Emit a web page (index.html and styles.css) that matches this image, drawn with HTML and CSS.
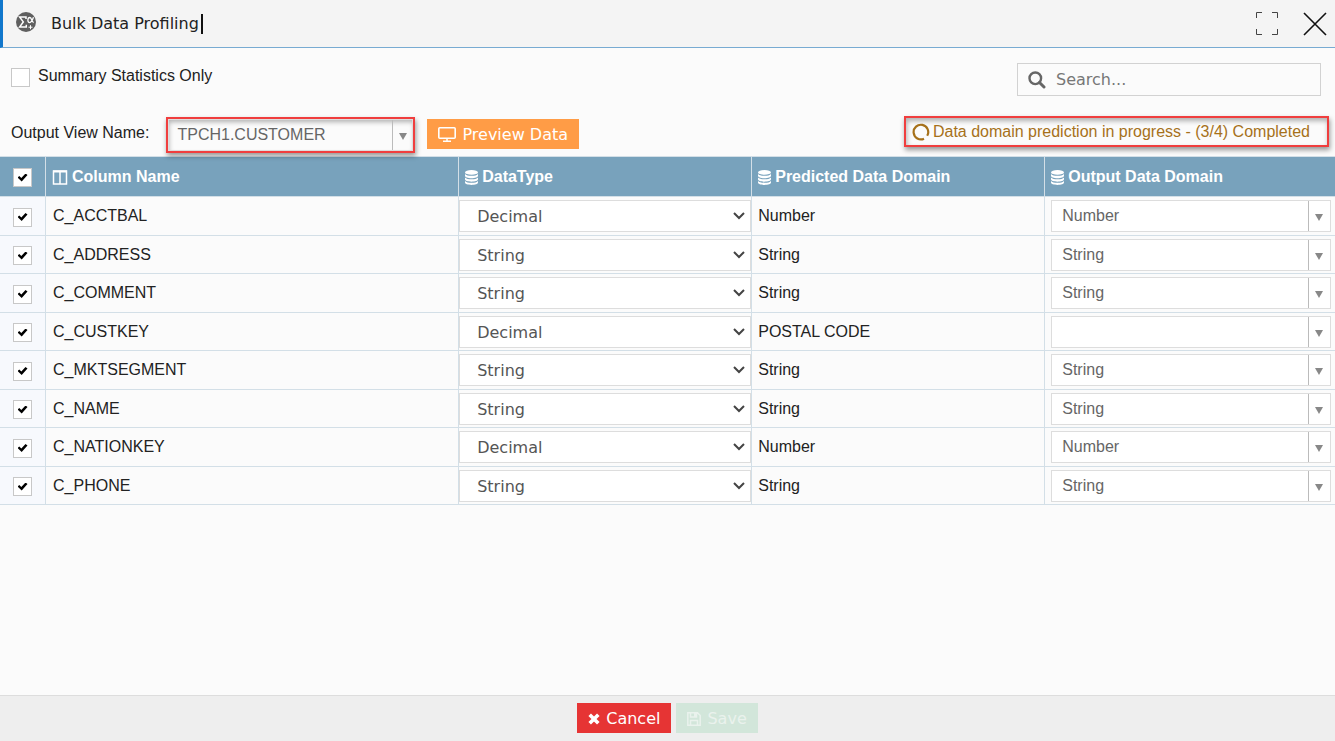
FILE: index.html
```html
<!DOCTYPE html>
<html lang="en">
<head>
  <meta charset="UTF-8">
  <meta name="viewport" content="width=device-width, initial-scale=1.0">
  <title>Bulk Data Profiling</title>
  <link rel="stylesheet" href="styles.css">
</head>
<body>
  <!-- Shared icons -->
  <svg class="icon-defs" aria-hidden="true">
    <symbol id="icon-database" viewBox="0 0 13 15">
      <ellipse cx="6.5" cy="2.4" rx="6.5" ry="2.4"/>
      <path d="M0 4c1 1.3 3.5 1.8 6.5 1.8S12 5.3 13 4v1.8c0 1.4-2.9 2.5-6.5 2.5S0 7.2 0 5.8z"/>
      <path d="M0 7.5c1 1.3 3.5 1.8 6.5 1.8s5.5-.5 6.5-1.8v1.8c0 1.4-2.9 2.4-6.5 2.4S0 10.7 0 9.3z"/>
      <path d="M0 10.9c1 1.3 3.5 1.8 6.5 1.8s5.5-.5 6.5-1.8v1.7C13 14 10.1 15 6.5 15S0 14 0 12.6z"/>
    </symbol>
  </svg>

  <header class="title-bar">
    <svg class="logo" viewBox="0 0 20 20" aria-hidden="true">
      <circle cx="10" cy="10" r="10" fill="#5f5f5f"/>
      <path d="M10 7V5H3.6L7.3 9.9L3.6 15H10.3V12.8" fill="none" stroke="#fff" stroke-width="1.5"/>
      <path d="M17.5 5.3C16.5 8 15.5 10.6 13.7 10.6C11.2 10.6 11.3 5.5 13.9 5.5C15.9 5.5 15.6 10.5 17.7 10.5" fill="none" stroke="#fff" stroke-width="1.3"/>
      <path d="M14.5 13.2v4M12.5 15.2h4" stroke="#fff" stroke-width="1"/>
    </svg>
    <h1>Bulk Data Profiling</h1>
    <button class="window-btn" aria-label="Full screen">
      <svg width="24" height="24" viewBox="0 0 24 24"><path d="M1.5 6V.5H7M17 .5h5.5V6M22.5 17v5.5H17M7 22.5H1.5V17" fill="none" stroke="#444" stroke-width="1"/></svg>
    </button>
    <button class="window-btn" aria-label="Close">
      <svg width="24" height="24" viewBox="0 0 24 24"><path d="M1 1L23 23M23 1L1 23" fill="none" stroke="#111" stroke-width="1.6"/></svg>
    </button>
  </header>

  <main>
    <div class="options">
      <label class="summary"><input type="checkbox"> Summary Statistics Only</label>
      <div class="search">
        <svg width="18" height="18" viewBox="0 0 18 18" aria-hidden="true"><circle cx="7.3" cy="7.3" r="5.8" fill="none" stroke="#666" stroke-width="2.4"/><path d="M11.5 11.5L16 16" stroke="#666" stroke-width="3" stroke-linecap="round"/></svg>
        <input type="text" placeholder="Search..." aria-label="Search">
      </div>
    </div>

    <div class="toolbar">
      <label for="view-name">Output View Name:</label>
      <div class="highlight">
        <div class="combo">
          <select id="view-name"><option>TPCH1.CUSTOMER</option></select>
        </div>
      </div>
      <button class="btn preview">
        <svg width="18" height="15" viewBox="0 0 18 15" aria-hidden="true"><rect x=".8" y=".8" width="16.4" height="10.4" rx="1" fill="none" stroke="#fff" stroke-width="1.6"/><path d="M9 11v3M5 14.2h8" stroke="#fff" stroke-width="1.5"/></svg>
        Preview Data
      </button>
      <div class="highlight status">
        <svg width="18" height="18" viewBox="0 0 18 18" aria-hidden="true"><path d="M12 15.7A7.3 7.3 0 1 1 15.2 12.8" fill="none" stroke="#a6711a" stroke-width="2.2"/></svg>
        <span>Data domain prediction in progress - (3/4) Completed</span>
      </div>
    </div>

    <table>
      <colgroup>
        <col class="col-check">
        <col class="col-name">
        <col class="col-type">
        <col class="col-type">
        <col>
      </colgroup>
      <thead>
        <tr>
          <th><input type="checkbox" aria-label="Select all" checked></th>
          <th><svg width="16" height="15" viewBox="0 0 16 15" aria-hidden="true"><path d="M1.5 1h13v13h-13zM8 1v13" fill="none" stroke="#fff" stroke-width="1.5"/><path d="M1 1.5h14" stroke="#fff" stroke-width="2"/></svg>Column Name</th>
          <th><svg width="13" height="15"><use href="#icon-database"/></svg>DataType</th>
          <th><svg width="13" height="15"><use href="#icon-database"/></svg>Predicted Data Domain</th>
          <th><svg width="13" height="15"><use href="#icon-database"/></svg>Output Data Domain</th>
        </tr>
      </thead>
      <tbody id="columns"></tbody>
    </table>
  </main>

  <footer>
    <button class="btn cancel">
      <svg width="12" height="12" viewBox="0 0 12 12" aria-hidden="true"><path d="M1.7 1.7l8.6 8.6M10.3 1.7l-8.6 8.6" stroke="#fff" stroke-width="3.6"/></svg>
      Cancel
    </button>
    <button class="btn save" disabled>
      <svg width="14" height="14" viewBox="0 0 14 14" aria-hidden="true"><path d="M.8.8h9.7l2.7 2.7v9.7H.8zM3.5 1v4h6V1M3.5 13V8.5h7V13" fill="none" stroke="currentColor" stroke-width="1.5"/><path d="M7 1h2.5v4H7z" fill="currentColor"/></svg>
      Save
    </button>
  </footer>

  <script>
    // name, data type, predicted domain, output domain
    const columns = [
      ['C_ACCTBAL', 'Decimal', 'Number', 'Number'],
      ['C_ADDRESS', 'String', 'String', 'String'],
      ['C_COMMENT', 'String', 'String', 'String'],
      ['C_CUSTKEY', 'Decimal', 'POSTAL CODE', ''],
      ['C_MKTSEGMENT', 'String', 'String', 'String'],
      ['C_NAME', 'String', 'String', 'String'],
      ['C_NATIONKEY', 'Decimal', 'Number', 'Number'],
      ['C_PHONE', 'String', 'String', 'String']
    ];

    document.getElementById('columns').innerHTML = columns.map(([name, type, predicted, output]) => `
      <tr>
        <td class="check"><input type="checkbox" aria-label="Select ${name}" checked></td>
        <td class="name">${name}</td>
        <td class="type">
          <div class="type-select">
            <select aria-label="${name} data type"><option>${type}</option></select>
            <svg width="12" height="8" viewBox="0 0 12 8"><path d="M1 1l5 5 5-5" fill="none" stroke="#444" stroke-width="2"/></svg>
          </div>
        </td>
        <td>${predicted}</td>
        <td class="output">
          <div class="combo"><select aria-label="${name} output domain"><option>${output}</option></select></div>
        </td>
      </tr>`).join('');
  </script>
</body>
</html>
```
FILE: styles.css
```css
* {
  box-sizing: border-box;
  margin: 0;
  padding: 0;
}

body {
  display: flex;
  flex-direction: column;
  min-height: 100vh;
  background-color: #fbfbfb;
  color: #222;
  font-family: "Liberation Sans", Arial, sans-serif;
  font-size: 16px;
  line-height: 20px;
}

button,
select,
input {
  font: inherit;
  color: inherit;
}

.icon-defs {
  display: none;
}

/* Title bar */
.title-bar {
  display: flex;
  align-items: center;
  height: 48px;
  padding: 0 8px 0 13px;
  background-color: #f4f4f4;
  border-left: 3px solid #1177cc;
  border-bottom: 1px solid #78abd2;
}

.logo {
  width: 20px;
  height: 20px;
  margin-bottom: 4px;
}

.title-bar h1 {
  margin: 0 auto 0 15px;
  padding-right: 2px;
  border-right: 2px solid #111;
  font-family: "DejaVu Sans", Verdana, sans-serif;
  font-size: 16px;
  font-weight: normal;
}

.window-btn {
  width: 24px;
  height: 24px;
  margin-left: 24px;
  background: none;
  border: none;
  cursor: pointer;
}

.window-btn svg {
  display: block;
}

/* Check boxes */
input[type="checkbox"] {
  flex: none;
  display: grid;
  place-items: center;
  width: 19px;
  height: 19px;
  appearance: none;
  background-color: #fff;
  border: 1px solid #c8c8c8;
}

input[type="checkbox"]:checked::before {
  content: "";
  width: 10px;
  height: 8px;
  background-color: #000;
  clip-path: polygon(0 50%, 18% 32%, 38% 55%, 80% 0, 100% 20%, 42% 100%);
}

/* Search and options */
.options {
  display: flex;
  justify-content: space-between;
  padding: 15px 14px 0 11px;
}

.summary {
  display: flex;
  align-items: center;
  gap: 8px;
  height: 26px;
}

.summary input {
  margin-top: 2px;
}

.search {
  display: flex;
  align-items: center;
  gap: 10px;
  width: 304px;
  height: 33px;
  padding: 0 10px;
  border: 1px solid #d2d2d2;
}

.search input {
  flex: 1;
  min-width: 0;
  background: none;
  border: none;
  outline: none;
  font-family: "DejaVu Sans", Verdana, sans-serif;
}

.search input::placeholder {
  color: #777;
}

.toolbar {
  display: flex;
  align-items: center;
  height: 60px;
  padding: 20px 6px 2px 11px;
}

.toolbar label {
  margin: 0 17px 4px 0;
}

.highlight {
  border: 2px solid #f03e3e;
  box-shadow: 1px 3px 5px rgba(0, 0, 0, 0.4), inset 1px 3px 5px rgba(0, 0, 0, 0.3);
}

.toolbar .combo {
  width: 245px;
}

.status {
  display: flex;
  align-items: center;
  gap: 3px;
  height: 31px;
  margin: 0 0 7px auto;
  padding: 0 17px 0 6px;
  color: #a6711a;
}

/* Drop-downs */
select {
  width: 100%;
  height: 32px;
  appearance: none;
  background-color: #fff;
  border: 1px solid #ddd;
  border-radius: 0;
  outline: none;
}

.combo {
  position: relative;
}

.combo select {
  display: block;
  padding: 0 24px 0 10px;
  color: #666;
}

.toolbar .combo select {
  padding-left: 8px;
  background: none;
}

.combo::before {
  content: "";
  position: absolute;
  top: 1px;
  right: 22px;
  bottom: 1px;
  border-left: 1px solid #bbb;
}

.combo::after {
  content: "";
  position: absolute;
  top: 14px;
  right: 8px;
  border: 4px solid transparent;
  border-top: 7px solid #888;
  border-bottom: none;
}

.toolbar .combo::before {
  right: 20px;
}

.toolbar .combo::after {
  right: 6px;
}

.type-select {
  position: relative;
}

.type-select select {
  display: block;
  padding: 2px 24px 0 17px;
  color: #555;
  font-family: "DejaVu Sans", Verdana, sans-serif;
}

.type-select svg {
  position: absolute;
  top: 12px;
  right: 6px;
  pointer-events: none;
}

/* Buttons */
.btn {
  display: flex;
  align-items: center;
  gap: 6px;
  height: 30px;
  padding: 2px 11px 0;
  border: none;
  color: #fff;
  font-family: "DejaVu Sans", Verdana, sans-serif;
  cursor: pointer;
}

.preview {
  margin: 0 0 3px 12px;
  background-color: #ff9c46;
}

.cancel {
  background-color: #e63434;
}

.save {
  background-color: #d2e6da;
  color: #eaf2ed;
  cursor: default;
}

/* Columns table */
table {
  width: 100%;
  table-layout: fixed;
  border-collapse: separate;
  border-spacing: 0;
  border-top: 1px solid #d3dfe7;
}

.col-check {
  width: 46px;
}

.col-name {
  width: 30.95%;
}

.col-type {
  width: 21.95%;
}

th,
td {
  padding: 0 6px;
  border-right: 1px solid #d3dfe7;
  border-bottom: 1px solid #d3dfe7;
  text-align: left;
}

th:last-child,
td:last-child {
  border-right: none;
}

th {
  height: 40px;
  background-color: #78a2bc;
  color: #fff;
}

th svg {
  margin-right: 4px;
  fill: #fff;
  vertical-align: -3px;
}

th input[type="checkbox"],
td input[type="checkbox"] {
  margin: 2px 0 0 7px;
}

td {
  height: 38px;
}

tbody tr:nth-child(odd) td {
  height: 39px;
}

.check {
  background-color: #f7f9fd;
}

.name {
  padding-left: 7px;
}

.type {
  padding: 0;
}

.output {
  padding: 0 4px 0 6px;
}

/* Footer */
footer {
  display: flex;
  justify-content: center;
  gap: 5px;
  height: 46px;
  margin-top: auto;
  padding-top: 7px;
  background-color: #eee;
  border-top: 1px solid #ddd;
}
```
